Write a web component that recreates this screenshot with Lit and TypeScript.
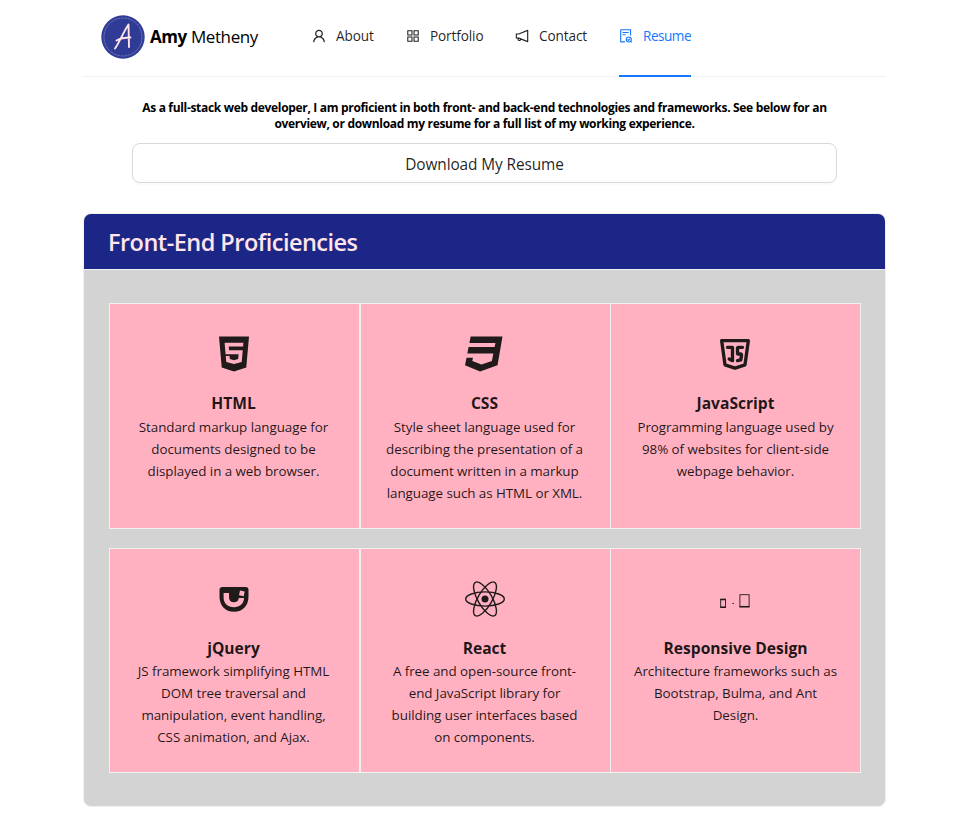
import { LitElement, html, css, svg } from "lit";
import { customElement } from "lit/decorators.js";

const navIcons = {
  user: svg`<path d="M858.5 763.6a374 374 0 0 0-80.6-119.5 375.63 375.63 0 0 0-119.5-80.6c-.4-.2-.8-.3-1.2-.5C719.5 518 760 444.7 760 362c0-137-111-248-248-248S264 225 264 362c0 82.7 40.5 156 102.800 201.100-.4.2-.8.300-1.200.500-44.800 18.900-85 46-119.500 80.600a375.630 375.630 0 0 0-80.600 119.500A371.700 371.700 0 0 0 136 901.800a8 8 0 0 0 8 8.200h60c4.400 0 7.900-3.500 8-7.800 2-77.200 33-149.500 87.800-204.300 56.700-56.700 132-87.900 212.200-87.900s155.500 31.200 212.200 87.900C779 752.700 810 825 812 902.200c.1 4.400 3.600 7.800 8 7.800h60a8 8 0 0 0 8-8.200c-1-47.800-10.900-94.300-29.500-138.200zM512 534c-45.900 0-89.100-17.900-121.600-50.400S340 407.900 340 362c0-45.900 17.900-89.100 50.400-121.600S466.100 190 512 190s89.100 17.900 121.600 50.400S684 316.100 684 362c0 45.900-17.900 89.100-50.400 121.600S557.900 534 512 534z"/>`,
  grid: svg`<path d="M464 144H160c-8.800 0-16 7.200-16 16v304c0 8.800 7.200 16 16 16h304c8.800 0 16-7.200 16-16V160c0-8.800-7.200-16-16-16zm-52 268H212V212h200v200zm452-268H560c-8.800 0-16 7.200-16 16v304c0 8.800 7.200 16 16 16h304c8.800 0 16-7.200 16-16V160c0-8.800-7.200-16-16-16zm-52 268H612V212h200v200zM464 544H160c-8.800 0-16 7.200-16 16v304c0 8.800 7.200 16 16 16h304c8.800 0 16-7.200 16-16V560c0-8.800-7.200-16-16-16zm-52 268H212V612h200v200zm452-268H560c-8.800 0-16 7.200-16 16v304c0 8.800 7.200 16 16 16h304c8.800 0 16-7.200 16-16V560c0-8.800-7.200-16-16-16zm-52 268H612V612h200v200z"/>`,
  horn: svg`<path d="M880 112c-3.800 0-7.700.7-11.600 2.300L292 345.900H128c-8.800 0-16 7.400-16 16.600v299c0 9.200 7.200 16.600 16 16.600h101.700c-3.700 11.600-5.700 23.900-5.700 36.400 0 65.900 53.800 119.500 120 119.500 55.400 0 102.100-37.600 115.900-88.400l408.600 164.200c3.900 1.500 7.800 2.300 11.600 2.300 16.900 0 32-14.200 32-33.200V145.200C912 126.200 897 112 880 112zM344 762.300c-26.500 0-48-21.400-48-47.800 0-11.200 3.900-21.900 11-30.400l84.900 34.100c-2 24.600-22.700 44.100-47.900 44.100zm496 58.400L318.800 611.300l-12.900-5.200H184V417.900h121.900l12.900-5.200L840 203.300v617.400z"/>`,
  audit: svg`<path d="M296 250c-4.400 0-8 3.600-8 8v48c0 4.400 3.600 8 8 8h384c4.400 0 8-3.600 8-8v-48c0-4.400-3.600-8-8-8H296zm184 144H296c-4.400 0-8 3.600-8 8v48c0 4.400 3.600 8 8 8h184c4.400 0 8-3.600 8-8v-48c0-4.400-3.600-8-8-8zm-48 458H208V148h560v320c0 4.400 3.600 8 8 8h56c4.400 0 8-3.600 8-8V108c0-17.700-14.300-32-32-32H168c-17.700 0-32 14.300-32 32v784c0 17.700 14.300 32 32 32h264c4.400 0 8-3.600 8-8v-56c0-4.400-3.600-8-8-8z"/><circle cx="690" cy="735" r="160" fill="none" stroke="currentColor" stroke-width="72"/><path d="M610 728l60 65 105-120M790 840l90 80" fill="none" stroke="currentColor" stroke-width="68"/>`,
};

const techIcons = {
  html5: svg`<svg class="tech" viewBox="-64 0 512 512"><path d="M0 32l34.9 395.8L191.5 480l157.6-52.2L384 32H0zm308.2 127.9H124.4l4.1 49.4h175.6l-13.6 148.4-97.9 27v.3h-1.100l-98.700-27.300-6-75.800h47.700L138 320l53.500 14.500 53.700-14.500 6-62.200H84.300L71.500 112.200h241.100l-4.400 47.700z"/></svg>`,
  css3: svg`<svg class="tech" viewBox="0 0 512 512"><path d="M480 32l-64 368-223.300 80L0 400l19.600-94.800h82l-8 40.600L210 390.200l134.100-44.400 18.800-97.100H29.500l16-82h333.700l10.500-52.700H56.300l16.300-82H480z"/></svg>`,
  js: svg`<svg class="tech line" viewBox="0 0 24 24"><path d="M20 4l-2 14.500l-6 2l-6 -2l-2 -14.500z"/><path d="M7.500 8h3v8l-2 -1"/><path d="M16.500 8h-2.500a.5 .5 0 0 0 -.5 .5v3a.5 .5 0 0 0 .5 .5h1.423a.5 .5 0 0 1 .495 .57l-.418 2.930l-2 .5"/></svg>`,
  jquery: svg`<svg class="tech" viewBox="0 0 40 40"><path fill-rule="evenodd" d="M8.500 8h23a3 3 0 0 1 3 3v6.500c0 9-5.500 15.300-14.500 15.300S5.500 26.500 5.500 17.500V11a3 3 0 0 1 3-3zM9.600 14v4.500c0 6 4.200 9.700 10.400 9.700 5.700 0 9.700-3.400 10.100-9.200h-5.300c-.4 3-2.100 4.300-4.800 4.300-3.300 0-5-2-5-5V14zM26 11.600l-1 4.700 4.700 1 1-4.700z"/></svg>`,
  react: svg`<svg class="tech orbit" viewBox="0 0 40 40"><circle cx="20" cy="20" r="3.500"/><ellipse cx="20" cy="20" rx="19.300" ry="7.100"/><ellipse cx="20" cy="20" rx="19.300" ry="7.100" transform="rotate(60 20 20)"/><ellipse cx="20" cy="20" rx="19.300" ry="7.100" transform="rotate(120 20 20)"/></svg>`,
  devices: svg`<svg class="tech gadget" viewBox="0 0 40 40"><rect x="5.700" y="20.300" width="4.800" height="8"/><path class="thick" d="M5.300 28.300h5.600M5.300 20.500h5.600"/><path d="M17.400 24.500h1.600"/><rect x="24.900" y="15.700" width="9.200" height="12"/><path class="thick" d="M24.500 27.700h10"/></svg>`,
};

const navItems = [
  { key: "about", label: "About", icon: navIcons.user },
  { key: "portfolio", label: "Portfolio", icon: navIcons.grid },
  { key: "contact", label: "Contact", icon: navIcons.horn },
  { key: "resume", label: "Resume", icon: navIcons.audit },
];

const skills = [
  { name: "HTML", icon: techIcons.html5, lines: ["Standard markup language for", "documents designed to be", "displayed in a web browser."] },
  { name: "CSS", icon: techIcons.css3, lines: ["Style sheet language used for", "describing the presentation of a", "document written in a markup", "language such as HTML or XML."] },
  { name: "JavaScript", icon: techIcons.js, lines: ["Programming language used by", "98% of websites for client-side", "webpage behavior."] },
  { name: "jQuery", icon: techIcons.jquery, lines: ["JS framework simplifying HTML", "DOM tree traversal and", "manipulation, event handling,", "CSS animation, and Ajax."] },
  { name: "React", icon: techIcons.react, lines: ["A free and open-source front-", "end JavaScript library for", "building user interfaces based", "on components."] },
  { name: "Responsive Design", icon: techIcons.devices, lines: ["Architecture frameworks such as", "Bootstrap, Bulma, and Ant", "Design."] },
];

@customElement("app-root")
export class AppRoot extends LitElement {
  static styles = css`
    :host {
      display: block;
      height: 820px;
      overflow: hidden;
      background: #fff;
      color: rgba(0, 0, 0, 0.88);
      font-family: "Open Sans", "Noto Sans", sans-serif;
      font-size: 14px;
    }
    * { box-sizing: border-box; }
    .page { width: 803px; margin: 0 auto; }
    .bar {
      display: flex;
      height: 77px;
      padding-left: 18px;
      border-bottom: 1px solid #f0f0f0;
    }
    .brand { display: flex; width: 211px; height: 74px; align-items: center; gap: 5px; }
    .badge { width: 44px; height: 44px; flex: none; }
    .name { font-size: 17px; line-height: 24px; letter-spacing: -0.4px; color: #000; white-space: nowrap; padding-bottom: 1px; }
    .menu { display: grid; grid-template-columns: 62px 77px 72px 72px; column-gap: 32px; }
    .item {
      display: flex;
      height: 77px;
      padding-bottom: 5px;
      align-items: center;
      gap: 10px;
      white-space: nowrap;
      font-size: 13.6px;
      letter-spacing: -0.12px;
    }
    .item svg { width: 14px; height: 14px; flex: none; fill: currentColor; }
    .item span { padding-bottom: 1px; }
    .item.on { color: #1677ff; border-bottom: 2px solid #1677ff; padding-bottom: 3px; letter-spacing: -0.5px; }
    .intro {
      margin: 23px 0 11px;
      text-align: center;
      font-size: 12px;
      line-height: 16px;
      font-weight: 700;
      color: #000;
      letter-spacing: -0.32px;
      white-space: nowrap;
    }
    .download {
      display: block;
      width: 705px;
      height: 40px;
      margin: 0 auto;
      border: 1px solid #d9d9d9;
      border-radius: 8px;
      background: #fff;
      box-shadow: 0 2px 0 rgba(0, 0, 0, 0.02);
      color: inherit;
      font: 400 15.4px/24px "Open Sans", sans-serif;
      letter-spacing: -0.1px;
      padding: 3px 0 0;
    }
    .card {
      margin-top: 30px;
      height: 594px;
      border: 1px solid #f0f0f0;
      border-radius: 8px;
      background: #d3d3d3;
      overflow: hidden;
    }
    .head {
      height: 56px;
      padding: 0 24px;
      background: #1c2686;
      border-bottom: 1px solid #f0f0f0;
      color: #ffe4e9;
      font-size: 23.5px;
      line-height: 57px;
      font-weight: 600;
      letter-spacing: -0.52px;
    }
    .grid {
      display: grid;
      grid-template-columns: 251px 251px 250px;
      grid-template-rows: 226px 225px;
      row-gap: 19px;
      padding: 33px 0 0 25px;
    }
    .cell {
      border: 1px solid #f0f0f0;
      background: #ffb1c1;
      padding: 30px 2px 0 0;
      text-align: center;
    }
    .cell:nth-child(3n) { border-left: 0; padding-right: 0; }
    .cell:nth-child(3n) .tech { margin-left: 104px; }
    .cell:nth-child(n + 4) .skill { line-height: 24px; }
    .tech { display: block; width: 40px; height: 40px; margin: 0 auto 17px; fill: #201a1b; }
    .line { fill: none; stroke: #201a1b; stroke-width: 2; stroke-linecap: round; stroke-linejoin: round; }
    .orbit ellipse { fill: none; stroke: #201a1b; stroke-width: 1.4; }
    .gadget { fill: none; stroke: #201a1b; stroke-width: 0.9; }
    .thick { stroke-width: 1.5; }
    .skill { font-size: 15.6px; line-height: 25px; font-weight: 700; margin: 0; }
    .copy { margin: 0; font-size: 13.4px; letter-spacing: -0.06px; line-height: 22px; white-space: nowrap; }
    .copy span { display: block; }
  `;

  render() {
    return html`
      <div class="page">
        <header class="bar">
          <div class="brand">
            <svg class="badge" viewBox="0 0 44 44">
              <circle cx="22" cy="22" r="21.700" fill="#303b96" />
              <circle cx="22" cy="22" r="19" fill="none" stroke="#6e77b5" stroke-width="0.900" stroke-dasharray="3 .6" />
              <path d="M14 33.500C18 28 23 16 27.500 9.500L28 32M15.500 25.500C20 23 25 22.500 29.500 22.500" fill="none" stroke="#ffe4e9" stroke-width="1.900" stroke-linecap="round" stroke-linejoin="round" />
            </svg>
            <div class="name"><b>Amy</b> Metheny</div>
          </div>
          <nav class="menu">
            ${navItems.map((n) => html`<div class="item ${n.key === "resume" ? "on" : ""}">
              <svg viewBox="64 64 896 896">${n.icon}</svg><span>${n.label}</span>
            </div>`)}
          </nav>
        </header>
        <div class="intro">
          As a full-stack web developer, I am proficient in both front- and back-end technologies and frameworks. See below for an<br />overview, or download my resume for a full list of my working experience.
        </div>
        <button class="download">Download My Resume</button>
        <section class="card">
          <div class="head">Front-End Proficiencies</div>
          <div class="grid">
            ${skills.map((s) => html`<div class="cell">
              ${s.icon}
              <h3 class="skill">${s.name}</h3>
              <p class="copy">${s.lines.map((l) => html`<span>${l}</span>`)}</p>
            </div>`)}
          </div>
        </section>
      </div>
    `;
  }
}
